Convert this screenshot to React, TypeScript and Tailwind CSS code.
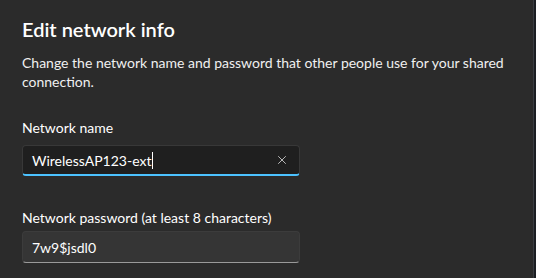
import { X } from "lucide-react";

const font = { fontFamily: '"Segoe UI", Lato, "Noto Sans", sans-serif' };

export default function App() {
  return (
    <div
      className="flex h-[278px] w-[536px] overflow-hidden bg-[#2b2b2b] text-white"
      style={font}
    >
      <div className="flex flex-1 flex-col px-[22px] pt-[15px]">
        <h1 className="text-[20px] font-semibold leading-[28px]">
          Edit network info
        </h1>
        <p className="mt-[10px] text-[14px] leading-[19px] text-[#f0f0f0]">
          Change the network name and password that other people use for your
          shared connection.
        </p>

        <label className="mt-[27px] text-[14px] leading-[19px]">
          Network name
        </label>
        <div className="mt-[8px] flex h-[31px] w-[278px] items-center rounded-[4px] border border-[#383838] border-b-2 border-b-[#4cc2ff] bg-[#1f1f1f] pl-[9px] pr-[10px]">
          <span className="text-[14px] leading-[19px]">WirelessAP123-ext</span>
          <span className="ml-[1px] h-[17px] w-px bg-white" />
          <X className="ml-auto h-[14px] w-[14px] text-[#cfcfcf]" strokeWidth={1.5} />
        </div>

        <label className="mt-[32px] text-[14px] leading-[19px]">
          Network password (at least 8 characters)
        </label>
        <div className="mt-[4px] flex h-[32px] w-[278px] items-center rounded-[4px] border border-[#3c3c3c] border-b-[#9a9a9a] bg-[#353535] pl-[9px]">
          <span className="text-[14px] leading-[19px]">7w9$jsdl0</span>
        </div>
      </div>
      <div className="w-[1px] bg-[#3a3d42]" />
      <div className="w-[2px] bg-[#1b1e23]" />
    </div>
  );
}
